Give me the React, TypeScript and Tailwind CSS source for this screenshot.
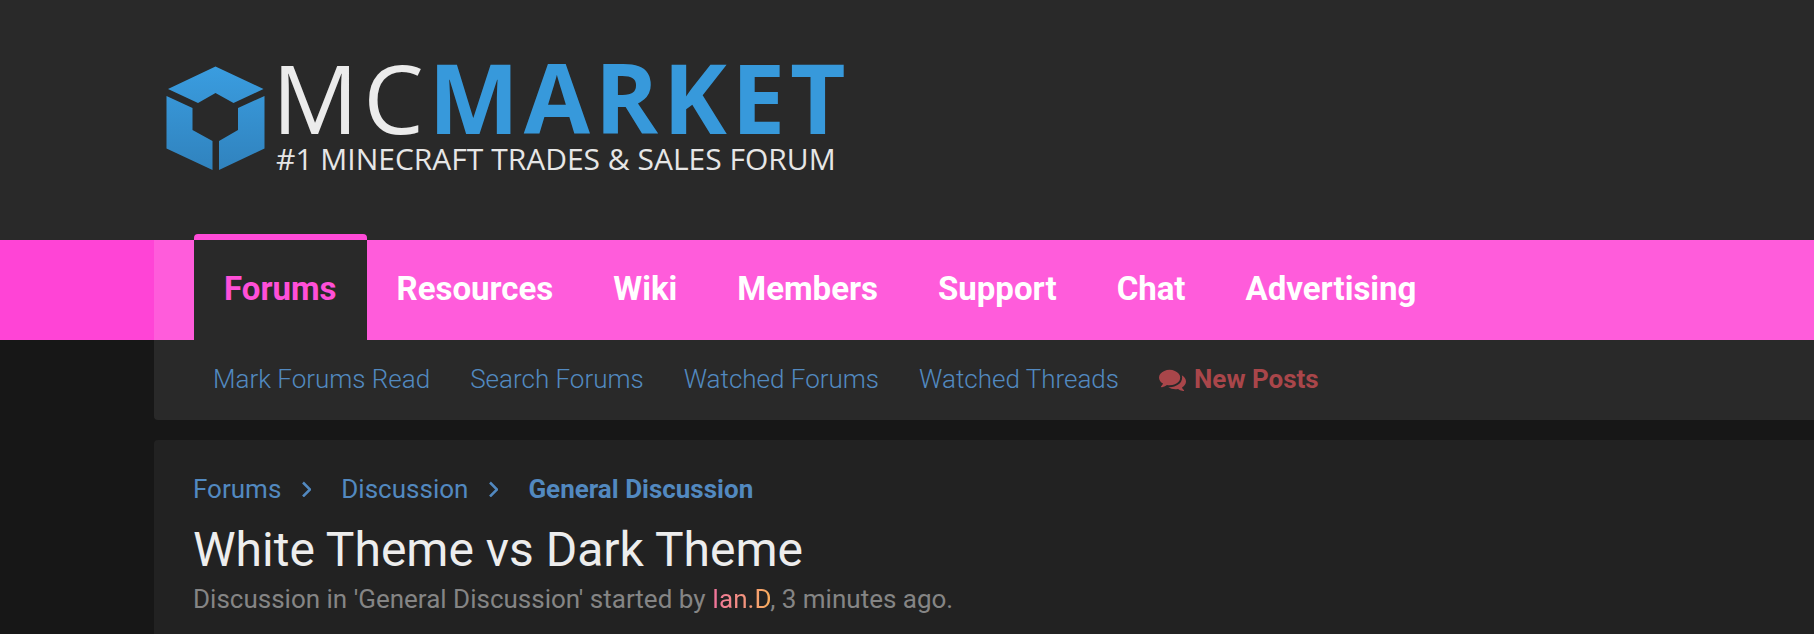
const tabs = ['Forums', 'Resources', 'Wiki', 'Members', 'Support', 'Chat', 'Advertising'];
const quickLinks = ['Mark Forums Read', 'Search Forums', 'Watched Forums', 'Watched Threads'];

function CubeLogo() {
  return (
    <svg className="w-[100px] h-[106px] shrink-0" viewBox="0 0 100 106" aria-hidden="true">
      <defs>
        <linearGradient id="cube" x1="0" y1="0" x2="0" y2="106" gradientUnits="userSpaceOnUse">
          <stop offset="0" stopColor="#3a9de0" />
          <stop offset="1" stopColor="#3082bd" />
        </linearGradient>
      </defs>
      <g fill="url(#cube)">
        <path d="M49.5 .5 97.5 23 67.5 37 49.5 27 32 37 2 23Z" />
        <path d="M.5 30 26.5 42V64L46.5 75V104L.5 82.5Z" />
        <path d="M98.5 30 72 42V64L53 75V104L98.5 82.5Z" />
      </g>
    </svg>
  );
}

function Chevron() {
  return (
    <svg className="w-2.5 h-4" viewBox="0 0 10 16" fill="none" stroke="#5289c0" strokeWidth="2.5" aria-hidden="true">
      <path d="M2 1.5 9 8.5 2 15.5" />
    </svg>
  );
}

function CommentsIcon() {
  return (
    <svg className="size-[27px]" viewBox="0 0 1792 1792" fill="currentColor" aria-hidden="true">
      <path d="M1408 768q0 139-94 257t-256.5 186.5-353.5 68.5q-86 0-176-16-124 88-278 128-36 9-86 16h-3q-11 0-20.5-8t-11.5-21q-1-3-1-6.5t.5-6.5 2-6l2.5-5 3.5-5.5 4-5 4.5-5 4-4.5q5-6 23-25t26-29.5 22.5-29 25-38.5 20.5-44q-124-72-195-177t-71-224q0-139 94-257t256.5-186.5 353.5-68.5 353.5 68.5 256.5 186.5 94 257zm384 256q0 120-71 224.5t-195 176.5q10 24 20.5 44t25 38.5 22.5 29 26 29.5 23 25q1 1 4 4.5t4.5 5 4 5 3.5 5.5l2.5 5 2 6 .5 6.5-1 6.5q-3 14-13 22t-22 7q-50-7-86-16-154-40-278-128-90 16-176 16-271 0-472-132 58 4 88 4 161 0 309-45t264-129q125-92 192-212t67-254q0-77-23-152 129 71 204 178t75 230z" />
    </svg>
  );
}

export default function App() {
  return (
    <div className="min-h-screen flex flex-col bg-[#171717] font-['Roboto',sans-serif]">
      <header className="bg-[#292929] pl-[166px] pt-[66px] h-60">
        <a href="#" className="inline-flex items-start gap-2.5 font-['Open_Sans',sans-serif]">
          <CubeLogo />
          <span className="flex flex-col">
            <span className="-ml-1 -mt-4 text-[96px] leading-[94px] tracking-wider text-[#ebebeb] whitespace-nowrap">
              MC<span className="font-bold text-[#3799db]">MARKET</span>
            </span>
            <span className="text-[30px] leading-[30px] text-[#e6e6e6] whitespace-nowrap">
              #1 MINECRAFT TRADES &amp; SALES FORUM
            </span>
          </span>
        </a>
      </header>

      {/* Main tabs */}
      <nav className="bg-[#ff44d6] pl-[154px]">
        <ul className="flex h-25 pl-10 bg-[#ff5cdb]">
          {tabs.map((tab, i) => (
            <li key={tab}>
              <a
                href="#"
                className={
                  i === 0
                    ? 'flex flex-col h-[106px] -mt-1.5 rounded-t bg-[#292929] overflow-hidden text-[33px] font-bold text-[#ff4fd8]'
                    : 'flex flex-col h-25 text-[33px] font-bold text-white'
                }
              >
                {i === 0 && <span className="h-1.5 bg-[#ff4ad8]" />}
                <span className="px-[30px] leading-[98px]">{tab}</span>
              </a>
            </li>
          ))}
        </ul>
      </nav>

      <div className="flex-1 flex flex-col gap-5 pl-[154px]">
        <nav className="flex items-center gap-10 h-20 pl-[59px] pb-0.5 rounded-bl bg-[#292929] text-[26px] leading-[30px] text-[#5289c0]">
          {quickLinks.map((link) => (
            <a key={link} href="#" className="font-light whitespace-nowrap">
              {link}
            </a>
          ))}
          <a href="#" className="flex items-center gap-2 font-bold text-[#a9464a] whitespace-nowrap">
            <CommentsIcon />
            New Posts
          </a>
        </nav>

        <main className="flex-1 pl-[39px] pt-[34px] rounded-tl bg-[#222222]">
          <nav className="flex items-center text-[26px] leading-[30px] text-[#5289c0]">
            <a href="#">Forums</a>
            <span className="pl-5 pr-[30px]"><Chevron /></span>
            <a href="#">Discussion</a>
            <span className="pl-5 pr-[30px]"><Chevron /></span>
            <a href="#" className="font-bold">General Discussion</a>
          </nav>
          <h1 className="mt-[18px] text-[48px] leading-[56px] text-[#ededed]">White Theme vs Dark Theme</h1>
          <p className="mt-1.5 text-[26px] leading-[30px] text-[#858585]">
            Discussion in 'General Discussion' started by{' '}
            <a href="#" className="bg-linear-to-r from-[#f0729c] to-[#f8ac5c] bg-clip-text text-transparent">Ian.D</a>
            , 3 minutes ago.
          </p>
        </main>
      </div>
    </div>
  );
}
